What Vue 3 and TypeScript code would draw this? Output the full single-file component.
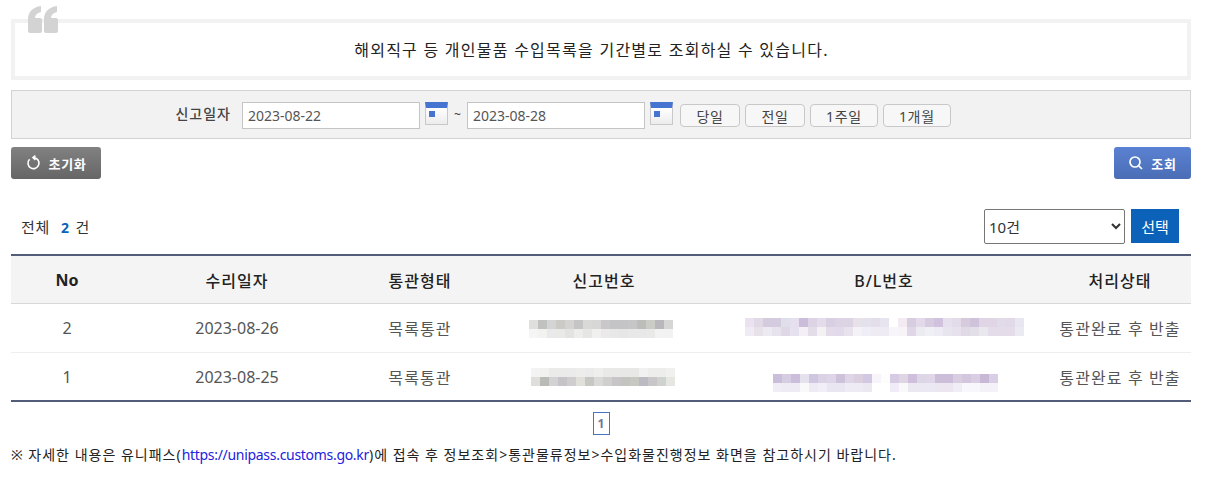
<script setup lang="ts">
import { ref } from 'vue';

interface Mosaic {
  cols: number;
  rows: string[];
  shift: number;
  top: number;
}

interface Row {
  no: number;
  date: string;
  kind: string;
  report: Mosaic;
  bl: Mosaic;
  status: string;
}

const from = ref('2023-08-22');
const to = ref('2023-08-28');
const pageSize = ref('10');
const ranges = ['당일', '전일', '1주일', '1개월'];

// 번호는 가려진 상태 그대로 모자이크로 표시
const rows: Row[] = [
  {
    no: 2,
    date: '2023-08-26',
    kind: '목록통관',
    report: {
      cols: 16,
      shift: -3,
      top: -1,
      rows: [
        'dfdfdd c1c1bf d4d4d4 cbcac6 d5d3d1 c6c5c6 d9d9d8 d7d7d5 c9c7ca c4c3c5 c4c3c5 c6c5c7 bcbcbb ccccc6 b9b7bb d6d6d5',
        'f5f5f5 f2f2f1 e9e9e9 e9e9e8 e3e3e2 ededec e6e6e4 f0f0ef ebe9ea e9e8e9 e7e6e7 e8e8e8 e8e8e8 e9e9e8 f2f2f2 f1f2f1',
      ],
    },
    bl: {
      cols: 31,
      shift: 0,
      top: -3,
      rows: [
        'ebe2ef e0d9e6 d4cbdf d4cbdf dfdfe9 e5dfef cbbcd9 dcd3e5 e3dcea d9cfe2 dcd3e5 dcd3e5 e9e1ea e3e1ec e3deea e7e3ef ffffff f3ebf1 d7cde1 e2daea d6cbdf d0c2dc e6e0ee e2dbe9 d5cbdd cfc2db dfd5e5 dfd5e5 e1dbe9 e1d9e7 e8e6f0',
        'efeaf3 e7e1ea eeeaf2 e6e3ee dfd6e6 e6e1ef f4eff7 e3dce9 f3f1f4 e3dbe9 e2daea e7e2ec f4f2f6 efedf6 efebf3 eeebf4 f7f5f9 f7f3f7 dfd6e6 ecebf2 eef0f5 efebf5 e9e5ef e6e1ec e0dae6 e3dfe9 ebe7ef e4dde9 e4dde9 e4dde9 eaeaf2',
      ],
    },
    status: '통관완료 후 반출',
  },
  {
    no: 1,
    date: '2023-08-25',
    kind: '목록통관',
    report: {
      cols: 16,
      shift: -1,
      top: -1,
      rows: [
        'f3f3f3 f1f1f0 ebebe9 ebebe9 eaebea ededeb ebebeb eeeeec e9e9e8 e9e9e8 e8e8e7 e8e8e7 f1f1f1 ededec ededed f0f0ee',
        'e0dedb b9bbb7 d3d1d4 c6c4c8 cfcdcd e0dfda c7c7c4 d9d9d7 cfcfce c8c5c9 c3c3bf c8c8c3 bcbbc4 c8c6c9 d0d2d0 e6e6e2',
      ],
    },
    bl: {
      cols: 25,
      shift: 1,
      top: 5,
      rows: [
        'cbbedb d7cde3 cbbedb e5e2ee cfc6df dcd2e6 ded5e8 cec1da ded5e6 dbcfdf d2c8e2 f7f5fa fdfdfd d7cae3 e0d5e5 cfbfdc dcd7e6 dfd7e8 ccbdd9 ccbdd9 d9cde2 d3c7df dacfe2 c8b8d6 d8cee5',
        'f0edf7 efebf5 efebf5 f9f8fb efebf5 f1eef7 eae6f1 eae6f1 efebf5 efebf5 ebe8f2 ffffff ffffff f0ebf6 f9f8fa ece8f2 ebe7f3 ebe7f3 ebe6f0 ebe6f0 f0edf6 f8f7fb f8f7fb f4f2f8 f4f2f8',
      ],
    },
    status: '통관완료 후 반출',
  },
];

function colors(line: string): string[] {
  return line.split(' ').map((c) => `#${c}`);
}

function mosaicStyle(m: Mosaic) {
  return {
    gridTemplateColumns: `repeat(${m.cols}, 9px)`,
    transform: `translate(${m.shift}px, ${m.top}px)`,
  };
}
</script>

<template>
  <div class="page">
    <div class="notice">
      <svg class="quote" viewBox="0 0 30 27" width="30" height="27">
        <path d="M0 25V13C0 6 5 1 13 0V6C9 7 7 9 7 12H12a2 2 0 0 1 2 2V25a2 2 0 0 1-2 2H2a2 2 0 0 1-2-2Z" fill="#d3d3d3" />
        <path d="M16 25V13C16 6 21 1 29 0V6C25 7 23 9 23 12H28a2 2 0 0 1 2 2V25a2 2 0 0 1-2 2H18a2 2 0 0 1-2-2Z" fill="#d3d3d3" />
      </svg>
      해외직구 등 개인물품 수입목록을 기간별로 조회하실 수 있습니다.
    </div>

    <div class="search">
      <label class="search-label">신고일자</label>
      <input v-model="from" class="date" type="text" />
      <span class="cal"><i></i></span>
      <span class="tilde">~</span>
      <input v-model="to" class="date" type="text" />
      <span class="cal"><i></i></span>
      <div class="ranges">
        <button v-for="r in ranges" :key="r" class="range" type="button">{{ r }}</button>
      </div>
    </div>

    <div class="actions">
      <button class="act reset" type="button">
        <svg viewBox="0 0 16 16" width="16" height="16" fill="none" stroke="#fff" stroke-width="1.6">
          <path d="M3.6 4.2A5.5 5.5 0 1 0 7.5 2.6" />
          <path d="M9.4 .6 7 2.6 9.4 4.8" />
        </svg>
        초기화
      </button>
      <button class="act query" type="button">
        <svg viewBox="0 0 16 16" width="16" height="16" fill="none" stroke="#fff" stroke-width="1.7">
          <circle cx="7" cy="7" r="5" />
          <path d="M10.8 10.8 14 14" />
        </svg>
        조회
      </button>
    </div>

    <div class="list-head">
      <div class="total">전체 <b>2</b> 건</div>
      <div class="size">
        <select v-model="pageSize" class="size-select">
          <option value="10">10건</option>
          <option value="20">20건</option>
          <option value="50">50건</option>
        </select>
        <button class="size-btn" type="button">선택</button>
      </div>
    </div>

    <table class="grid">
      <colgroup>
        <col style="width: 112px" />
        <col style="width: 228px" />
        <col style="width: 138px" />
        <col style="width: 230px" />
        <col style="width: 330px" />
        <col style="width: 142px" />
      </colgroup>
      <thead>
        <tr>
          <th class="latin">No</th>
          <th>수리일자</th>
          <th>통관형태</th>
          <th>신고번호</th>
          <th>B/L번호</th>
          <th>처리상태</th>
        </tr>
      </thead>
      <tbody>
        <tr v-for="row in rows" :key="row.no">
          <td>{{ row.no }}</td>
          <td>{{ row.date }}</td>
          <td class="ko">{{ row.kind }}</td>
          <td>
            <div class="mosaic" :style="mosaicStyle(row.report)">
              <template v-for="(line, i) in row.report.rows" :key="i">
                <span v-for="(c, j) in colors(line)" :key="j" :style="{ background: c }"></span>
              </template>
            </div>
          </td>
          <td>
            <div class="mosaic" :style="mosaicStyle(row.bl)">
              <template v-for="(line, i) in row.bl.rows" :key="i">
                <span v-for="(c, j) in colors(line)" :key="j" :style="{ background: c }"></span>
              </template>
            </div>
          </td>
          <td class="ko">{{ row.status }}</td>
        </tr>
      </tbody>
    </table>

    <div class="paging"><a class="page-no">1</a></div>

    <p class="foot">
      ※ 자세한 내용은 유니패스(<span class="link">https://unipass.customs.go.kr</span>)에 접속 후 정보조회&gt;통관물류정보&gt;수입화물진행정보 화면을 참고하시기 바랍니다.
    </p>
  </div>
</template>

<style scoped>
.page {
  width: 1180px;
  margin-left: 11px;
  padding-top: 19px;
  font-family: "Noto Sans", "Noto Sans CJK KR", sans-serif;
  color: #333;
  font-size: 14px;
}

.notice {
  position: relative;
  box-sizing: border-box;
  height: 61px;
  border: 4px solid #f2f2f2;
  display: flex;
  align-items: center;
  justify-content: center;
  font-size: 16px;
  letter-spacing: 1.25px;
  color: #222;
  padding: 0 19px 2px 0;
}

.quote {
  position: absolute;
  left: 13px;
  top: -17px;
}

.search {
  box-sizing: border-box;
  height: 49px;
  margin-top: 10px;
  background: #f2f2f2;
  border: 1px solid #d2d2d2;
  display: flex;
  align-items: flex-start;
  padding: 11px 0 0 162px;
}

.search-label {
  width: 57px;
  margin-right: 11px;
  line-height: 24px;
  font-size: 14px;
  font-weight: 500;
  letter-spacing: 1px;
  color: #444;
  text-align: right;
  white-space: nowrap;
}

.date {
  box-sizing: border-box;
  width: 178px;
  height: 27px;
  border: 1px solid #c4c4c4;
  background: #fff;
  padding: 0 5px;
  font-family: inherit;
  font-size: 14px;
  color: #555;
  outline: none;
}

.cal {
  box-sizing: border-box;
  position: relative;
  display: block;
  width: 23px;
  height: 23px;
  margin-left: 5px;
  border: 1px solid #c8c8c8;
  border-top: 6px solid #4674d1;
  background: linear-gradient(#fff, #ececec);
}

.cal i {
  position: absolute;
  left: 3px;
  top: 3px;
  width: 6px;
  height: 6px;
  background: #4674d1;
}

.tilde {
  width: 19px;
  text-align: center;
  line-height: 26px;
  font-size: 12px;
  color: #333;
}

.ranges {
  display: flex;
  gap: 5px;
  margin: 2px 0 0 7px;
}

.range {
  box-sizing: border-box;
  height: 23px;
  min-width: 60px;
  padding: 0 15px;
  border: 1px solid #c8c8c8;
  border-radius: 4px;
  background: #f7f7f7;
  font-family: inherit;
  font-size: 14px;
  letter-spacing: 0.7px;
  color: #444;
}

.actions {
  display: flex;
  justify-content: space-between;
  margin-top: 8px;
}

.act {
  box-sizing: border-box;
  height: 32px;
  border: 0;
  border-radius: 3px;
  display: flex;
  align-items: center;
  justify-content: center;
  gap: 7px;
  color: #fff;
  font-family: inherit;
  font-size: 13px;
  letter-spacing: 0.7px;
  font-weight: 700;
}

.reset {
  width: 90px;
  background: linear-gradient(#818181, #666);
}

.query {
  width: 77px;
  background: linear-gradient(#5a81d2, #4a6db5);
}

.list-head {
  display: flex;
  justify-content: space-between;
  align-items: center;
  margin-top: 30px;
  height: 35px;
}

.total {
  padding-left: 10px;
  font-size: 15px;
  letter-spacing: 0.8px;
  color: #333;
}

.total b {
  color: #0b62b8;
  font-size: 14px;
  margin: 0 1px 0 6px;
}

.size {
  display: flex;
  gap: 6px;
  margin-right: 12px;
}

.size-select {
  box-sizing: border-box;
  width: 141px;
  height: 35px;
  padding-left: 0;
  border: 1px solid #767676;
  border-radius: 2px;
  background: #fff;
  font-family: inherit;
  font-size: 15px;
  color: #333;
}

.size-btn {
  width: 48px;
  height: 34px;
  border: 0;
  background: #0b62b8;
  color: #fff;
  font-family: inherit;
  font-size: 15px;
}

.grid {
  width: 100%;
  margin-top: 10px;
  border-collapse: collapse;
  table-layout: fixed;
  border-top: 2px solid #535d7b;
  border-bottom: 2px solid #535d7b;
}

.grid th {
  height: 47px;
  padding: 0;
  background: #f4f4f4;
  border-bottom: 1px solid #d8d8d8;
  font-size: 16px;
  font-weight: 500;
  letter-spacing: 1px;
  color: #222;
}

.grid th.latin {
  font-weight: 700;
  letter-spacing: 0;
}

.grid td {
  height: 48px;
  padding: 0;
  border-bottom: 1px solid #eee;
  text-align: center;
  font-size: 16px;
  color: #555;
}

.grid td.ko {
  letter-spacing: 1.1px;
}

.grid tbody tr:last-child td {
  height: 47px;
  border-bottom: 0;
}

.mosaic {
  display: inline-grid;
  grid-auto-rows: 9px;
  vertical-align: middle;
}

.paging {
  display: flex;
  justify-content: center;
  margin-top: 10px;
}

.page-no {
  box-sizing: border-box;
  width: 17px;
  height: 23px;
  border: 1px solid #4674c0;
  text-align: center;
  line-height: 21px;
  font-size: 12px;
  font-weight: 700;
  color: #6b7a99;
}

.foot {
  margin: 9px 0 0;
  font-size: 14px;
  letter-spacing: 1px;
  color: #222;
  white-space: nowrap;
}

.link {
  color: #2222dd;
  letter-spacing: -0.3px;
}
</style>
